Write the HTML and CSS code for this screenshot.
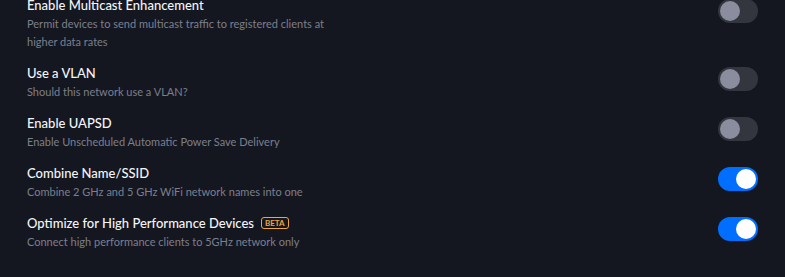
FILE: index.html
```html
<!DOCTYPE html>
<html>
<head>
<meta charset="utf-8">
<link rel="stylesheet" href="styles.css">
</head>
<body>
<div class="list">
  <div class="row">
    <div class="text">
      <div class="title">Enable Multicast Enhancement</div>
      <div class="desc">Permit devices to send multicast traffic to registered clients at higher data rates</div>
    </div>
    <div class="toggle"><span class="knob"></span></div>
  </div>
  <div class="row">
    <div class="text">
      <div class="title">Use a VLAN</div>
      <div class="desc">Should this network use a VLAN?</div>
    </div>
    <div class="toggle"><span class="knob"></span></div>
  </div>
  <div class="row">
    <div class="text">
      <div class="title">Enable UAPSD</div>
      <div class="desc">Enable Unscheduled Automatic Power Save Delivery</div>
    </div>
    <div class="toggle"><span class="knob"></span></div>
  </div>
  <div class="row">
    <div class="text">
      <div class="title">Combine Name/SSID</div>
      <div class="desc">Combine 2 GHz and 5 GHz WiFi network names into one</div>
    </div>
    <div class="toggle on"><span class="knob"></span></div>
  </div>
  <div class="row">
    <div class="text">
      <div class="title">Optimize for High Performance Devices <span class="badge">BETA</span></div>
      <div class="desc">Connect high performance clients to 5GHz network only</div>
    </div>
    <div class="toggle on"><span class="knob"></span></div>
  </div>
</div>
</body>
</html>
```
FILE: styles.css
```css
html, body {
  margin: 0;
  padding: 0;
  background: #151720;
  height: 100%;
  overflow: hidden;
}
body {
  font-family: Lato, "Noto Sans", sans-serif;
}
.list {
  display: flex;
  flex-direction: column;
  gap: 12px;
  padding: 0 27px 0 27px;
  margin-top: -5px;
}
.row {
  display: flex;
  justify-content: space-between;
  align-items: flex-start;
}
.text {
  max-width: 310px;
}
.title {
  font-size: 13px;
  line-height: 20px;
  font-weight: 500;
  color: #f4f5f7;
  display: flex;
  align-items: center;
}
.desc {
  font-size: 11px;
  line-height: 18px;
  color: #7c7f8c;
}
.badge {
  display: inline-block;
  margin-left: 7px;
  border: 1px solid #f2a53a;
  border-radius: 3px;
  color: #f2a53a;
  font-size: 8px;
  font-weight: 700;
  line-height: 10px;
  padding: 0 3px;
}
.toggle {
  width: 40px;
  height: 24px;
  border-radius: 12px;
  background: #33353f;
  margin-top: 4px;
  display: flex;
  align-items: center;
  padding: 0 2px;
  box-sizing: border-box;
  flex-shrink: 0;
}
.knob {
  width: 20px;
  height: 20px;
  border-radius: 50%;
  background: #8a8d9d;
}
.toggle.on {
  background: #006fff;
  justify-content: flex-end;
}
.toggle.on .knob {
  background: #ffffff;
}
```
